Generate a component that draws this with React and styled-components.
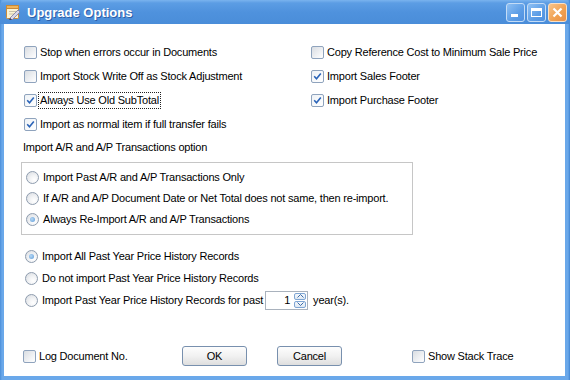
import React from 'react';
import styled, { createGlobalStyle } from 'styled-components';

const GlobalStyle = createGlobalStyle`
  html, body {
    margin: 0;
    padding: 0;
    background: #fff;
  }
  body {
    font-family: "Liberation Sans", Arial, sans-serif;
    font-size: 11px;
    letter-spacing: -0.2px;
    color: #000;
  }
`;

function TitleIcon() {
  return (
    <svg width="16" height="16" viewBox="0 0 16 16">
      <rect x="1.5" y="1.5" width="12" height="13" rx="1" fill="#fbf3d4" stroke="#c88a3a" />
      <rect x="1.5" y="1.5" width="12" height="3" fill="#f0b45a" stroke="#c88a3a" />
      <line x1="4" y1="7.5" x2="11" y2="7.5" stroke="#c9c2a8" />
      <line x1="4" y1="10" x2="11" y2="10" stroke="#c9c2a8" />
      <path d="M5 14 L13 6 L15 8 L7 16 Z" fill="#d8d8e8" stroke="#7a7aa0" strokeWidth="0.8" />
      <path d="M5 14 L4 16 L7 16 Z" fill="#404060" />
    </svg>
  );
}

function CheckMark() {
  return (
    <svg width="9" height="9" viewBox="0 0 9 9">
      <path d="M1.2 4.3 L3.5 6.8 L7.8 1.6" fill="none" stroke="#2a63b8" strokeWidth="1.6" />
    </svg>
  );
}

function Checkbox({ checked, focused, children }) {
  return (
    <Item>
      <Box $checked={checked}>{checked && <CheckMark />}</Box>
      <Label $focused={focused}>{children}</Label>
    </Item>
  );
}

function Radio({ checked, children }) {
  return (
    <Item>
      <Circle>{checked && <Dot />}</Circle>
      <RadioLabel>{children}</RadioLabel>
    </Item>
  );
}

function Spinner({ value }) {
  return (
    <SpinBox>
      <SpinValue>{value}</SpinValue>
      <SpinButtons>
        <SpinButton>
          <svg width="7" height="4" viewBox="0 0 7 4">
            <path d="M0.5 3.5 L3.5 0.5 L6.5 3.5" fill="none" stroke="#3a6aa8" />
          </svg>
        </SpinButton>
        <SpinButton>
          <svg width="7" height="4" viewBox="0 0 7 4">
            <path d="M0.5 0.5 L3.5 3.5 L6.5 0.5" fill="none" stroke="#3a6aa8" />
          </svg>
        </SpinButton>
      </SpinButtons>
    </SpinBox>
  );
}

export default function App() {
  return (
    <>
      <GlobalStyle />
      <Window>
        <TitleBar>
          <TitleIcon />
          <Title>Upgrade Options</Title>
          <Controls>
            <CtrlButton>
              <MinGlyph />
            </CtrlButton>
            <CtrlButton>
              <MaxGlyph />
            </CtrlButton>
            <CtrlButton $close>
              <svg width="11" height="11" viewBox="0 0 11 11">
                <path d="M1.5 1.5 L9.5 9.5 M9.5 1.5 L1.5 9.5" stroke="#fff" strokeWidth="2.2" />
              </svg>
            </CtrlButton>
          </Controls>
        </TitleBar>
        <Body>
          <TopGrid>
            <Column>
              <Row><Checkbox>Stop when errors occur in Documents</Checkbox></Row>
              <Row><Checkbox>Import Stock Write Off as Stock Adjustment</Checkbox></Row>
              <Row><Checkbox checked focused>Always Use Old SubTotal</Checkbox></Row>
              <Row><Checkbox checked>Import as normal item if full transfer fails</Checkbox></Row>
            </Column>
            <Column>
              <Row><Checkbox>Copy Reference Cost to Minimum Sale Price</Checkbox></Row>
              <Row><Checkbox checked>Import Sales Footer</Checkbox></Row>
              <Row><Checkbox checked>Import Purchase Footer</Checkbox></Row>
            </Column>
          </TopGrid>

          <SectionLabel>Import A/R and A/P Transactions option</SectionLabel>
          <GroupBox>
            <GroupRow><Radio>Import Past A/R and A/P Transactions Only</Radio></GroupRow>
            <GroupRow><Radio>If A/R and A/P Document Date or Net Total does not same, then re-import.</Radio></GroupRow>
            <GroupRow><Radio checked>Always Re-Import A/R and A/P Transactions</Radio></GroupRow>
          </GroupBox>

          <PriceOptions>
            <PriceRow><Radio checked>Import All Past Year Price History Records</Radio></PriceRow>
            <PriceRow><Radio>Do not import Past Year Price History Records</Radio></PriceRow>
            <PriceRow>
              <Radio>Import Past Year Price History Records for past</Radio>
              <Spinner value="1" />
              <Suffix>year(s).</Suffix>
            </PriceRow>
          </PriceOptions>

          <Footer>
            <FooterLeft><Checkbox>Log Document No.</Checkbox></FooterLeft>
            <Button>OK</Button>
            <Button>Cancel</Button>
            <FooterRight><Checkbox>Show Stack Trace</Checkbox></FooterRight>
          </Footer>
        </Body>
      </Window>
    </>
  );
}

const Window = styled.div`
  width: 570px;
  height: 380px;
  display: flex;
  flex-direction: column;
  background: linear-gradient(to right, #4a8ed9, #6aa8ea 2px, #6aa8ea 568px, #3f84d2);
  box-sizing: border-box;
  overflow: hidden;
`;

const TitleBar = styled.div`
  height: 24px;
  flex: none;
  display: flex;
  align-items: center;
  padding: 0 3px 0 5px;
  background: linear-gradient(to bottom, #7ab3ee 0, #5c9de4 3px, #4f92dd 12px, #4a8dd9 24px);
  border-radius: 6px 6px 0 0;
`;

const Title = styled.div`
  margin-left: 6px;
  color: #fff;
  font-weight: bold;
  font-size: 13px;
  letter-spacing: 0;
  text-shadow: 1px 1px 0 rgba(20, 50, 120, 0.55);
  flex: 1;
`;

const Controls = styled.div`
  display: flex;
  gap: 2px;
  align-self: flex-start;
  margin-top: 3px;
`;

const CtrlButton = styled.div`
  width: 19px;
  height: 19px;
  box-sizing: border-box;
  border: 1px solid ${(p) => (p.$close ? '#fbe0c4' : '#c4dcf6')};
  border-radius: 3px;
  background: ${(p) =>
    p.$close
      ? 'linear-gradient(135deg, #f8c48a, #f0a050 60%, #e8904a)'
      : 'linear-gradient(135deg, #8ec0f4, #5c9de6 60%, #4f90e0)'};
  display: flex;
  align-items: center;
  justify-content: center;
  position: relative;
`;

const MinGlyph = styled.div`
  width: 7px;
  height: 3px;
  background: #fff;
  position: absolute;
  left: 4px;
  bottom: 4px;
`;

const MaxGlyph = styled.div`
  width: 11px;
  height: 9px;
  box-sizing: border-box;
  border: 1px solid #fff;
  border-top-width: 3px;
`;

const Body = styled.div`
  flex: 1;
  margin: 0 5px 4px 4px;
  background: #fff;
  display: flex;
  flex-direction: column;
  padding: 16px 0 10px 0;
`;

const TopGrid = styled.div`
  display: grid;
  grid-template-columns: 287px 1fr;
  padding-left: 20px;
`;

const Column = styled.div`
  display: flex;
  flex-direction: column;
`;

const Row = styled.div`
  height: 24px;
  display: flex;
  align-items: center;
`;

const Item = styled.div`
  display: flex;
  align-items: center;
  white-space: nowrap;
`;

const Box = styled.div`
  width: 13px;
  height: 13px;
  box-sizing: border-box;
  border: 1px solid #8fa3bd;
  border-radius: 2px;
  background: ${(p) =>
    p.$checked
      ? 'linear-gradient(135deg, #eef2f6, #ffffff)'
      : 'linear-gradient(135deg, #d9dde2, #f4f5f7 70%, #ffffff)'};
  display: flex;
  align-items: center;
  justify-content: center;
  flex: none;
`;

const Label = styled.span`
  line-height: 13px;
  margin-left: ${(p) => (p.$focused ? '1px' : '3px')};
  padding: ${(p) => (p.$focused ? '1px 1px' : '0')};
  border: ${(p) => (p.$focused ? '1px dotted #222' : 'none')};
`;

const Circle = styled.div`
  width: 13px;
  height: 13px;
  box-sizing: border-box;
  border: 1px solid #8e9cae;
  border-radius: 50%;
  background: radial-gradient(circle at 65% 70%, #ffffff 0, #f2f3f5 40%, #d6dadf 100%);
  display: flex;
  align-items: center;
  justify-content: center;
  flex: none;
`;

const Dot = styled.div`
  width: 5px;
  height: 5px;
  border-radius: 50%;
  background: radial-gradient(circle at 40% 40%, #b8d8f4, #5a9ad8);
`;

const RadioLabel = styled.span`
  margin-left: 4px;
  line-height: 13px;
`;

const SectionLabel = styled.div`
  height: 14px;
  line-height: 14px;
  margin: 4px 0 0 19px;
`;

const GroupBox = styled.div`
  margin: 8px 0 0 17px;
  width: 392px;
  height: 73px;
  box-sizing: border-box;
  border: 1px solid #c6c6c6;
  padding: 4px 0 0 4px;
  display: flex;
  flex-direction: column;
`;

const GroupRow = styled.div`
  height: 21px;
  display: flex;
  align-items: center;
`;

const PriceOptions = styled.div`
  margin-top: 10px;
  padding-left: 21px;
  display: flex;
  flex-direction: column;
`;

const PriceRow = styled.div`
  height: 22px;
  display: flex;
  align-items: center;
`;

const SpinBox = styled.div`
  margin-left: 2px;
  width: 43px;
  height: 19px;
  box-sizing: border-box;
  border: 1px solid #a9b2bd;
  display: flex;
  align-items: center;
  justify-content: flex-end;
  padding-right: 1px;
  background: #fff;
`;

const SpinValue = styled.span`
  margin-right: 4px;
`;

const SpinButtons = styled.div`
  display: flex;
  flex-direction: column;
  gap: 1px;
`;

const SpinButton = styled.div`
  width: 12px;
  height: 7px;
  box-sizing: border-box;
  border: 1px solid #7fa6d4;
  border-radius: 2px;
  background: linear-gradient(to bottom, #f4f8fc, #dfe8f2);
  display: flex;
  align-items: center;
  justify-content: center;
`;

const Suffix = styled.span`
  margin-left: 5px;
`;

const Footer = styled.div`
  margin-top: auto;
  height: 20px;
  display: flex;
  align-items: center;
  padding-left: 19px;
`;

const FooterLeft = styled.div`
  width: 159px;
`;

const Button = styled.div`
  width: 65px;
  height: 20px;
  box-sizing: border-box;
  border: 1px solid #7890ae;
  border-radius: 3px;
  background: linear-gradient(to bottom, #fdfdfd, #f1f1f1 50%, #dedede);
  display: flex;
  align-items: center;
  justify-content: center;
  & + & {
    margin-left: 30px;
  }
`;

const FooterRight = styled.div`
  margin-left: 70px;
`;
